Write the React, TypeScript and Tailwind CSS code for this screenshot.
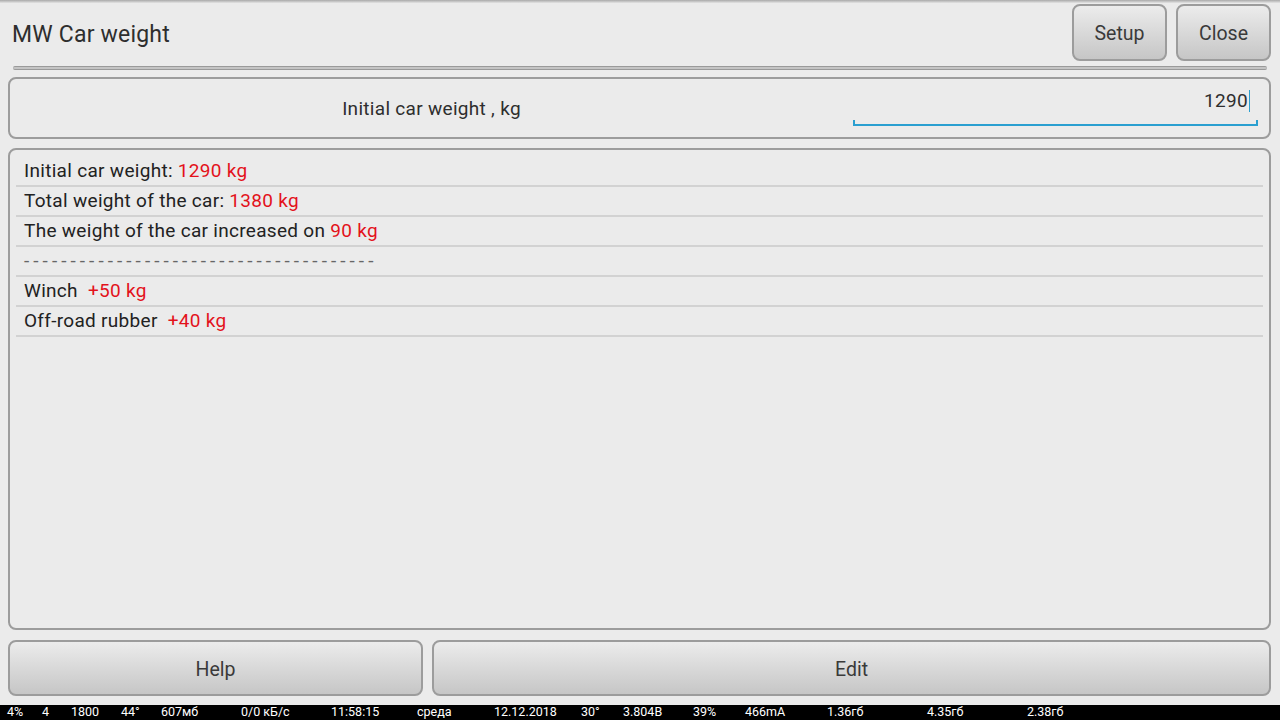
import React from "react";

const rows: { label: string; value: string }[] = [
  { label: "Initial car weight: ", value: "1290 kg" },
  { label: "Total weight of the car: ", value: "1380 kg" },
  { label: "The weight of the car increased on ", value: "90 kg" },
];

const extras: { label: string; value: string }[] = [
  { label: "Winch  ", value: "+50 kg" },
  { label: "Off-road rubber  ", value: "+40 kg" },
];

const status: { text: string; w: string }[] = [
  { text: "4%", w: "w-[35px]" },
  { text: "4", w: "w-[29px]" },
  { text: "1800", w: "w-[50px]" },
  { text: "44°", w: "w-[40px]" },
  { text: "607мб", w: "w-[80px]" },
  { text: "0/0 кБ/с", w: "w-[90px]" },
  { text: "11:58:15", w: "w-[86px]" },
  { text: "среда", w: "w-[77px]" },
  { text: "12.12.2018", w: "w-[87px]" },
  { text: "30°", w: "w-[42px]" },
  { text: "3.804В", w: "w-[70px]" },
  { text: "39%", w: "w-[52px]" },
  { text: "466mA", w: "w-[82px]" },
  { text: "1.36гб", w: "w-[100px]" },
  { text: "4.35гб", w: "w-[100px]" },
  { text: "2.38гб", w: "w-[100px]" },
];

function Button({ label, className }: { label: string; className: string }) {
  return (
    <button
      className={
        "flex items-center justify-center rounded-[8px] border-2 border-[#9c9c9c] bg-gradient-to-b from-[#ececec] to-[#c6c6c6] pt-[3px] text-[19.5px] text-[#3a3a3a] " +
        className
      }
    >
      {label}
    </button>
  );
}

function Row({ children }: { children: React.ReactNode }) {
  return (
    <div className="flex h-[30px] items-center border-b-2 border-[#d2d2d2] pl-[8px] pt-[1px] text-[19px] tracking-[0.3px] text-[#222] whitespace-pre">
      {children}
    </div>
  );
}

export default function App() {
  return (
    <div className="flex h-[720px] w-[1280px] flex-col overflow-hidden bg-[#ebebeb] font-['Roboto',sans-serif]">
      <div className="h-[3px] bg-gradient-to-b from-[#a9a9a9] to-[#e4e4e4]" />

      <div className="flex h-[63px] items-center justify-between pl-[12px] pr-[9px]">
        <h1 className="pt-[2px] text-[23px] tracking-[0.2px] text-[#2e2e2e]">MW Car weight</h1>
        <div className="flex gap-[9px] self-start pt-[1px]">
          <Button label="Setup" className="h-[57px] w-[95px]" />
          <Button label="Close" className="h-[57px] w-[95px]" />
        </div>
      </div>

      <div className="mx-[13px] h-[4px] rounded-full border-y border-[#9a9a9a] bg-[#c4c4c4]" />

      <div className="ml-[8px] mr-[9px] mt-[7px] flex h-[62px] rounded-[8px] border-2 border-[#9c9c9c]">
        <div className="flex flex-1 items-center justify-center pt-[3px] text-[19px] tracking-[0.3px] text-[#2e2e2e]">
          Initial car weight , kg
        </div>
        <div className="relative mr-[11px] w-[405px]">
          <div className="absolute right-[8px] top-[8px] flex items-center text-[19px] tracking-[0.3px] text-[#2e2e2e]">
            1290
            <span className="ml-[1px] h-[22px] w-[1px] bg-[#2a9fd0]" />
          </div>
          <div className="absolute bottom-[11px] left-0 right-0 h-[6px] border-x-2 border-b-2 border-[#2a9fd0]" />
        </div>
      </div>

      <div className="ml-[8px] mr-[9px] mt-[9px] flex h-[482px] flex-col rounded-[8px] border-2 border-[#9c9c9c] px-[6px] pt-[7px]">
        {rows.map((r) => (
          <Row key={r.label}>
            {r.label}
            <span className="text-[#e3121b]">{r.value}</span>
          </Row>
        ))}
        <Row>
          <span className="tracking-[4.05px] text-[#666]">
            {"--------------------------------------"}
          </span>
        </Row>
        {extras.map((r) => (
          <Row key={r.label}>
            {r.label}
            <span className="text-[#e3121b]">{r.value}</span>
          </Row>
        ))}
      </div>

      <div className="ml-[8px] mr-[9px] mt-[10px] flex gap-[9px]">
        <Button label="Help" className="h-[56px] w-[415px]" />
        <Button label="Edit" className="h-[56px] flex-1" />
      </div>

      <div className="mt-[9px] flex h-[15px] items-center bg-black pl-[7px] text-[12.5px] leading-none text-white font-['Liberation_Sans_Narrow','Roboto',sans-serif]">
        {status.map((s) => (
          <span key={s.text} className={"shrink-0 whitespace-nowrap " + s.w}>
            {s.text}
          </span>
        ))}
      </div>
    </div>
  );
}
